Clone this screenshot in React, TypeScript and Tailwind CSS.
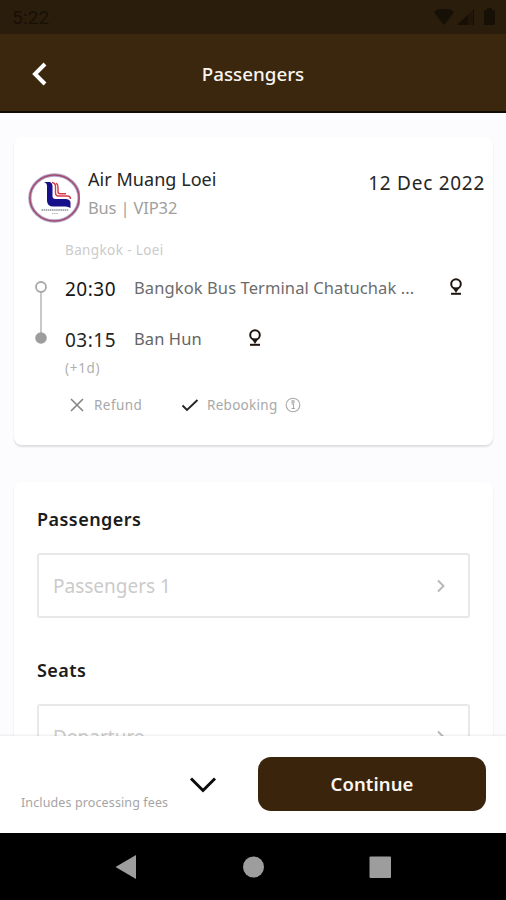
import type { ReactNode } from 'react';

function Pin() {
  return (
    <svg className="h-[18px] w-[14px] shrink-0" viewBox="0 0 14 18" fill="none" stroke="#21160f" strokeWidth="2">
      <circle cx="7" cy="6" r="4.8" />
      <path d="M3.500 9.500 7 15l3.500-5.500" fill="#21160f" stroke="none" />
      <path d="M2 15.800h10" strokeWidth="2" />
    </svg>
  );
}

function Logo() {
  return (
    <svg className="mt-[2px] h-[50px] w-[52px] shrink-0" viewBox="0 0 52 50">
      <ellipse cx="26.500" cy="25" rx="24.6" ry="23" fill="#fff" stroke="#b3a5cb" strokeWidth="3.400" />
      <ellipse cx="26.500" cy="25" rx="24.6" ry="23" fill="none" stroke="#a34a6c" strokeWidth="1.500" />
      <path d="M16 9h6q2.500 1 2.500 4v10q0 3 3 3h10q4 0 5 3v6q-2-1.500-5-1.500H25.500q-6.500 0-6.500-6V13q0-3-3-4Z" fill="#16108a" />
      <path d="M24 9.500q3.500 .5 3.500 4v6.500q0 3 3 3h9q3 0 3 3M28 10.200q2 1 2 4v4q0 2.500 2 2.500h6" fill="none" stroke="#d33b4b" strokeWidth="1.400" />
      <path d="M13.500 37h27" stroke="#8b929b" strokeWidth="1.500" strokeDasharray="1.500 .6" />
      <path d="M24 40.500h6" stroke="#b5b5bb" strokeDasharray="1.500 .6" />
    </svg>
  );
}

function Chevron() {
  return (
    <svg className="h-[14px] w-[10px]" viewBox="0 0 10 14" fill="none" stroke="#b8b8b8" strokeWidth="2">
      <path d="m2 1.500 5.500 5.500L2 12.500" />
    </svg>
  );
}

function Field({ title, children }: { title: string; children: ReactNode }) {
  return (
    <section className="flex flex-col">
      <h2 className="h-6 text-[18px] leading-6 font-semibold tracking-[0.45px] text-[#1b1b1b]">{title}</h2>
      <div className="mt-[22px] flex h-[65px] items-center justify-between rounded-[3px] border-2 border-[#e8e8e8] pr-[22px] pl-[14px]">
        <span className="text-[19px] leading-6 text-[#cbcbcb]">{children}</span>
        <Chevron />
      </div>
    </section>
  );
}

export default function App() {
  return (
    <div className="flex h-[900px] w-[506px] flex-col overflow-hidden bg-[#fcfcfe] font-['Noto_Sans','Open_Sans',sans-serif] whitespace-nowrap">
      <div className="flex h-[34px] shrink-0 items-center justify-between bg-[#2b1d0c] pr-[10px] pl-[12px] text-[#171006]">
        <span className="pt-[2px] font-['Roboto',sans-serif] text-[19px] leading-6 tracking-[0.2px]">5:22</span>
        <svg className="h-[18px] w-[62px]" viewBox="0 0 62 18" fill="currentColor">
          <path d="M0 4.500Q2 1 7 1h6q5 0 7 3.500L10 17Z" />
          <path d="M40 1v16H23Z" opacity=".45" />
          <path d="M34 7v10H23ZM39 1h1v16h-1Z" />
          <path d="M51 2h2V0h5v2h2q1 0 1 1v13q0 1-1 1h-9q-1 0-1-1V3q0-1 1-1Z" />
        </svg>
      </div>
      <header className="grid h-[79px] shrink-0 grid-cols-[1fr_auto_1fr] items-center border-b-2 border-[#100b05] bg-[#3b270e]">
        <svg className="ml-[31px] h-[26px] w-[17px]" viewBox="0 0 17 26" fill="none" stroke="#fff" strokeWidth="4">
          <path d="M14 4 4 14l10 10" />
        </svg>
        <h1 className="pt-[3px] text-[18.800px] leading-6 font-medium text-[#f8f5f0]">Passengers</h1>
      </header>

      <main className="flex min-h-0 flex-1 flex-col gap-[37px] overflow-hidden pt-[24px] pr-[13px] pl-[14px]">
        <section className="flex h-[308px] shrink-0 flex-col rounded-[8px] bg-white pr-[8px] pl-[14px] shadow-[0_2px_2px_0_rgba(40,40,50,0.14)]">
          <div className="flex h-[86px] pt-[34px]">
            <Logo />
            <div className="ml-[8px] flex flex-1 flex-col">
              <span className="-mt-[4px] h-6 text-[18px] leading-6 tracking-[0.05px] text-[#262626]">Air Muang Loei</span>
              <span className="mt-[5px] h-6 text-[16.500px] leading-6 tracking-[-0.15px] text-[#a0a0a0]">Bus | VIP32</span>
            </div>
            <span className="h-6 text-[19px] leading-6 tracking-[0.720px] text-[#262626]">12 Dec 2022</span>
          </div>
          <span className="mt-[17px] ml-[37px] h-5 text-[13.500px] leading-5 tracking-[0.380px] text-[#cbcbcb]">Bangkok - Loei</span>
          <div className="mt-[15px] flex">
            <svg className="ml-[6px] h-[70px] w-[14px] shrink-0" viewBox="0 0 14 70">
              <path d="M7 16v46" stroke="#c9c9c9" strokeWidth="2" />
              <circle cx="7" cy="12" r="5" fill="#fff" stroke="#a8a8a8" strokeWidth="1.800" />
              <circle cx="7" cy="63" r="5.800" fill="#9d9d9d" />
            </svg>
            <div className="ml-[17px] flex flex-1 flex-col">
              <div className="flex h-6 items-center">
                <span className="w-[69px] pt-[4px] text-[19px] leading-6 tracking-[0.500px] text-[#161616]">20:30</span>
                <span className="w-[315px] pt-[2px] text-[16.500px] leading-6 tracking-[0.100px] text-[#6c6c6c]">Bangkok Bus Terminal Chatuchak ...</span>
                <Pin />
              </div>
              <div className="mt-[27px] flex h-6 items-center">
                <span className="w-[69px] pt-[3px] text-[19px] leading-6 tracking-[0.500px] text-[#242424]">03:15</span>
                <span className="w-[114px] pt-[2px] text-[16.500px] leading-6 tracking-[0.100px] text-[#656565]">Ban Hun</span>
                <Pin />
              </div>
              <span className="mt-[8px] h-5 text-[13.500px] leading-5 tracking-[0.700px] text-[#b0b0b0]">(+1d)</span>
            </div>
          </div>
          <div className="mt-[17px] ml-[42px] flex h-5 items-center text-[13.500px] leading-5 text-[#a8a8a8]">
            <svg className="h-[14px] w-[14px]" viewBox="0 0 14 14" stroke="#858585" strokeWidth="1.600">
              <path d="m1 1 12 12M13 1 1 13" />
            </svg>
            <span className="ml-[10px] w-[87px] tracking-[0.450px]">Refund</span>
            <svg className="h-[14px] w-[18px]" viewBox="0 0 18 14" fill="none" stroke="#242424" strokeWidth="1.900">
              <path d="m1.500 7.500 4.500 4.500L16.500 2" />
            </svg>
            <span className="ml-[8px] w-[78px] tracking-[0.280px]">Rebooking</span>
            <svg className="h-[16px] w-[16px]" viewBox="0 0 16 16" fill="none" stroke="#aaa" strokeWidth="1.100">
              <circle cx="8" cy="8" r="6.800" />
              <circle cx="8" cy="4.800" r="1.200" />
              <path d="M6.500 7h2v4.500h1.500M6.500 11.500h2" />
            </svg>
          </div>
        </section>
        <section className="flex h-[360px] shrink-0 flex-col gap-[40px] rounded-t-[8px] bg-white px-[23px] pt-[25px] shadow-[0_2px_2px_0_rgba(40,40,50,0.14)]">
          <Field title="Passengers">Passengers 1</Field>
          <Field title="Seats">Departure</Field>
        </section>
      </main>

      <footer className="z-10 flex h-[97px] shrink-0 bg-white shadow-[0_-1px_2px_rgba(0,0,0,0.08)]">
        <span className="mt-[57px] ml-[21px] h-5 w-[168px] text-[12.500px] leading-5 tracking-[0.120px] text-[#a5a5a5]">Includes processing fees</span>
        <svg className="mt-[40px] h-[18px] w-[28px]" viewBox="0 0 28 18" fill="none" stroke="#0c0c0c" strokeWidth="3">
          <path d="m2 2.500 12 12 12-12" />
        </svg>
        <button className="mt-[21px] ml-[41px] flex h-[54px] w-[228px] items-center justify-center rounded-[13px] bg-[#3a250c] text-[18.500px] font-semibold tracking-[0.100px] text-[#faf7f2]">
          Continue
        </button>
      </footer>
      <nav className="h-[67px] shrink-0 bg-black">
        <svg className="h-[67px] w-[506px]" viewBox="0 0 506 67" fill="#9d9d9d">
          <path d="M115.500 34 136 22v24Z" />
          <circle cx="253.500" cy="34" r="10.500" />
          <rect x="369.500" y="23.500" width="21.500" height="21.500" rx="1" />
        </svg>
      </nav>
    </div>
  );
}
